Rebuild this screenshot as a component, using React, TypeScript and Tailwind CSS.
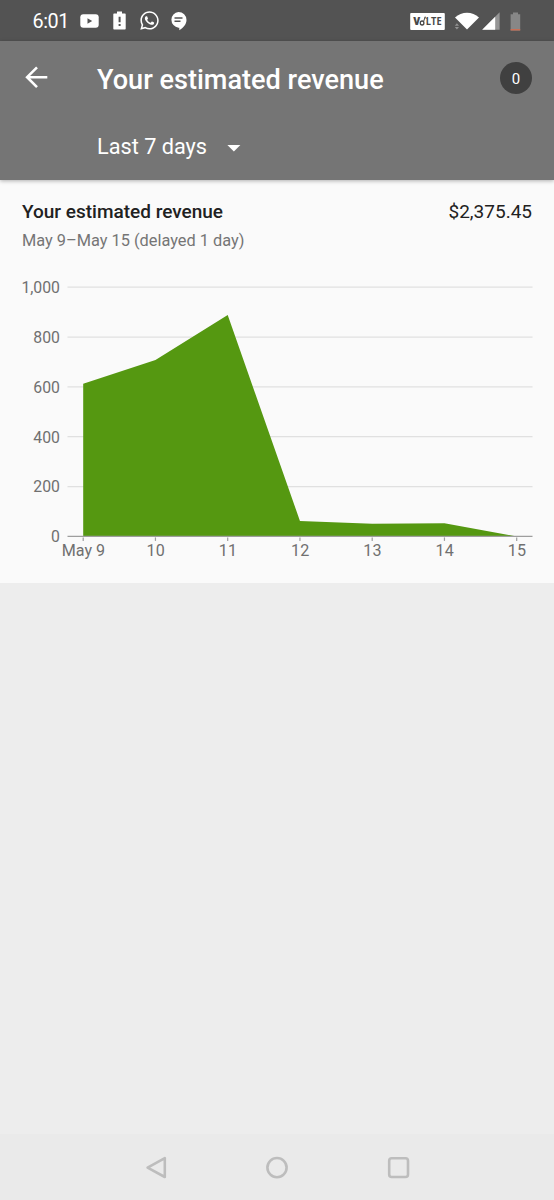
import { FaWhatsapp } from "react-icons/fa";

const REVENUE = [
  { label: "May 9", value: 613 },
  { label: "10", value: 708 },
  { label: "11", value: 888 },
  { label: "12", value: 62 },
  { label: "13", value: 51 },
  { label: "14", value: 53 },
  { label: "15", value: 0 },
];

const GRID_VALUES = [1000, 800, 600, 400, 200, 0];

const BASELINE = 266.4;
const CHART_HEIGHT = 249.2;

const xFor = (i: number) => 83.2 + i * 72.25;
const yFor = (value: number) => BASELINE - (value / 1000) * CHART_HEIGHT;

function StatusBar() {
  return (
    <div className="flex h-[41px] items-center bg-[#535353] pl-[32.5px] text-white">
      <span className="w-[47.5px] pt-[2px] text-[19.8px] leading-none tracking-[-0.4px]">6:01</span>
      <svg className="h-[14px] w-[19px]" viewBox="0 0 19 14">
        <rect x="0.3" y="0.3" width="18.4" height="13.4" rx="3" fill="currentColor" />
        <path d="M7.5 4.2v5.6L12.2 7z" fill="#535353" />
      </svg>
      <svg className="ml-[14px] h-[19px] w-[13px]" viewBox="0 0 13 19">
        <path
          d="M4 .5h5v2h3a.7.7 0 0 1 .7.7v14.6a.7.7 0 0 1-.7.7H1a.7.7 0 0 1-.7-.7V3.2A.7.7 0 0 1 1 2.5h3z"
          fill="currentColor"
        />
        <path d="M5.6 5.7h2v5.6h-2zM5.6 13h2v2h-2z" fill="#535353" />
      </svg>
      <FaWhatsapp className="ml-[12.5px] size-[21px]" />
      <svg className="ml-[10.5px] h-[20px] w-[17px]" viewBox="0 0 17 20">
        <path
          d="M8.5 1a8 7.9 0 0 1 8 7.9c0 4-3.1 8-7.2 10.3v-2.5H8.5A8 7.9 0 0 1 8.5 1z"
          fill="currentColor"
        />
        <path d="M4.5 7h8M4.5 10.3h6" stroke="#535353" strokeWidth="1.4" />
      </svg>

      <div className="ml-auto flex items-center pt-px pr-[33px]">
        <svg className="h-[17px] w-[35px] text-[#484848]" viewBox="0 0 35 17">
          <rect x="0.2" width="34.6" height="17" rx="1" fill="#fff" />
          <text x="3.3" y="12.2" fontSize="10" fontWeight="800" fill="currentColor" fontFamily="Open Sans">
            V
          </text>
          <path d="M13.6 8.6l1.6-5M15 4.2l1.4 1.6" stroke="currentColor" strokeWidth="1" fill="none" />
          <ellipse cx="12.1" cy="10" rx="1.8" ry="2" stroke="currentColor" strokeWidth="1.3" fill="none" />
          <text
            x="15.8"
            y="12.2"
            fontSize="10"
            fontWeight="700"
            fill="currentColor"
            fontFamily="Open Sans"
            textLength="15.8"
            lengthAdjust="spacingAndGlyphs"
          >
            LTE
          </text>
        </svg>
        <svg className="ml-[9px] h-[18px] w-[26px]" viewBox="0 0 26 18">
          <path d="M1 5.5C7.5-.9 18.5-.9 25 5.5L13 17.5z" fill="currentColor" />
          <path d="M.8 13.8l2.1-2.6L5 13.8zM.8 14.9l2.1 2.6L5 14.9z" fill="#929292" />
        </svg>
        <svg className="ml-[2px] h-[18px] w-[18px]" viewBox="0 0 18 18">
          <path d="M17.6.3v17.5H.2z" fill="#969696" />
          <path d="M13.2 4.7v13.1H.2z" fill="currentColor" />
        </svg>
        <svg className="ml-[10px] h-[19px] w-[11px]" viewBox="0 0 11 19">
          <path d="M3 .5h5v1.8h2.2v16.2H.6V2.3H3z" fill="#878787" />
          <path d="M.6 17h9.6v1.5H.6z" fill="#c96f55" />
        </svg>
      </div>
    </div>
  );
}

function Header() {
  return (
    <header className="relative z-10 h-[139px] bg-[#757575] text-white shadow-[0_1px_4px_rgba(0,0,0,0.3)]">
      <div className="flex h-[73px] items-center px-[22px]">
        <svg className="size-[29px]" viewBox="0 0 29 29" fill="none" stroke="currentColor" strokeWidth="2.6">
          <path d="M25.3 14.2H5.4M15 4.3L5.1 14.2l9.9 9.9" />
        </svg>
        <h1 className="ml-[46px] pt-[4px] text-[27.1px] leading-8 font-medium">Your estimated revenue</h1>
        <span className="mt-px ml-auto flex size-8 items-center justify-center rounded-full bg-[#404040] pt-[2px] text-[15px]">
          0
        </span>
      </div>
      <div className="flex h-[65px] items-center pl-[97px]">
        <span className="text-[21.7px] leading-7">Last 7 days</span>
        <svg className="mt-1 ml-[20px] h-[7px] w-[14px]" viewBox="0 0 14 7">
          <path d="M.4 0h13L6.9 6.6z" fill="currentColor" />
        </svg>
      </div>
    </header>
  );
}

function RevenueChart() {
  const points = REVENUE.map((day, i) => `${xFor(i)},${yFor(day.value)}`).join(" ");

  return (
    <svg className="block h-[313px] w-[554px]" viewBox="0 0 554 313">
      {GRID_VALUES.map((value) => (
        <g key={value}>
          {value > 0 && (
            <line x1="67.5" x2="532.5" y1={yFor(value)} y2={yFor(value)} stroke="#e0e0e0" strokeWidth="1.2" />
          )}
          <text x="60" y={yFor(value) + 5.8} textAnchor="end" fontSize="15.8" fill="#707070">
            {value.toLocaleString("en-US")}
          </text>
        </g>
      ))}
      <polygon points={`${xFor(0)},${BASELINE} ${points}`} fill="#559811" />
      <line x1="67.5" x2="532.5" y1={BASELINE} y2={BASELINE} stroke="#9e9e9e" strokeWidth="1.2" />
      {REVENUE.map((day, i) => (
        <g key={day.label}>
          <line x1={xFor(i)} x2={xFor(i)} y1={BASELINE + 1} y2={BASELINE + 4.5} stroke="#9e9e9e" strokeWidth="1.2" />
          <text x={xFor(i) + 0.2} y={BASELINE + 19.5} textAnchor="middle" fontSize="16.1" fill="#707070">
            {day.label}
          </text>
        </g>
      ))}
    </svg>
  );
}

function NavigationBar() {
  return (
    <nav className="flex h-[66px] items-center justify-between bg-[#eaeaea] px-[144px] text-[#bdbdbd]">
      <svg className="size-6" viewBox="0 0 24 24" fill="none" stroke="currentColor" strokeWidth="2.6" strokeLinejoin="round">
        <path d="M20.8 3.2v18.8L3.6 12.6z" />
      </svg>
      <svg className="size-6" viewBox="0 0 24 24" fill="none" stroke="currentColor" strokeWidth="2.6">
        <circle cx="12" cy="12.6" r="9.6" />
      </svg>
      <svg className="size-6" viewBox="0 0 24 24" fill="none" stroke="currentColor" strokeWidth="2.6">
        <rect x="3.2" y="3.2" width="18.8" height="18.8" rx="2.5" />
      </svg>
    </nav>
  );
}

export default function App() {
  return (
    <div className="flex h-[1200px] w-[554px] flex-col overflow-hidden bg-[#ededed] font-[Roboto,sans-serif]">
      <StatusBar />
      <Header />
      <main className="flex-1">
        <section className="h-[403px] bg-[#fafafa]">
          <div className="h-[90px] px-[22px] pt-[19px]">
            <div className="flex items-center justify-between text-[19px] leading-[26px] text-[#212121]">
              <h2 className="font-medium">Your estimated revenue</h2>
              <span>$2,375.45</span>
            </div>
            <p className="mt-1 text-[16.35px] leading-[23px] text-[#757575]">May 9–May 15 (delayed 1 day)</p>
          </div>
          <RevenueChart />
        </section>
      </main>
      <NavigationBar />
    </div>
  );
}
